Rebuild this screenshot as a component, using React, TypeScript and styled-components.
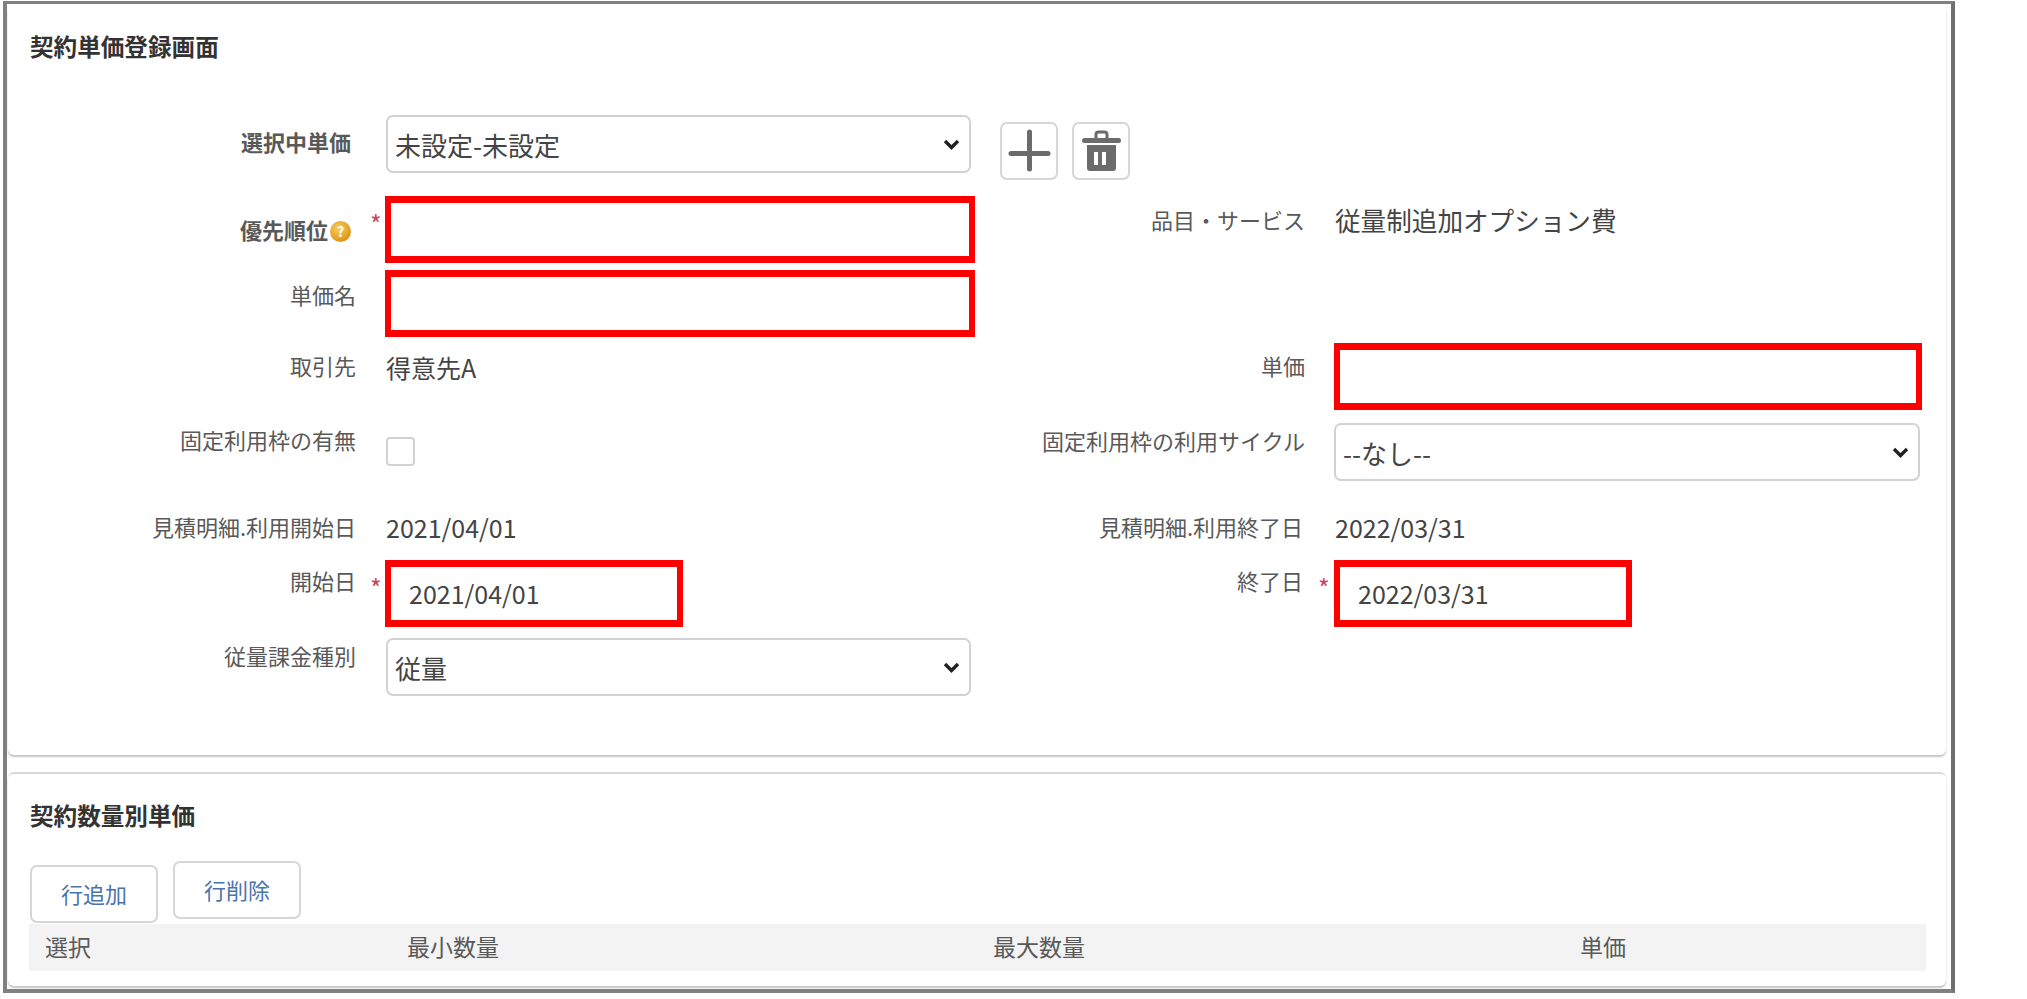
import styled, { createGlobalStyle } from 'styled-components';

const GlobalStyle = createGlobalStyle`
  html, body {
    margin: 0;
    padding: 0;
    background: #ffffff;
    font-family: "Noto Sans CJK JP", "Liberation Sans", sans-serif;
  }
`;

const chevron = encodeURIComponent(
  '<svg xmlns="http://www.w3.org/2000/svg" width="17" height="11" viewBox="0 0 17 11"><path d="M2 2l6.5 6.5L15 2" fill="none" stroke="#222" stroke-width="3.4"/></svg>',
);

const Frame = styled.div`
  box-sizing: border-box;
  width: 1952px;
  height: 992px;
  margin: 1px 0 0 3px;
  border: 4px solid #808080;
  border-top-width: 3px;
  border-right-color: #6f6f6f;
  padding: 0 5px 3px 1px;
  display: flex;
  flex-direction: column;
  gap: 17px;
`;

const Panel = styled.section<{ $height: number; $topBorder?: boolean }>`
  box-sizing: border-box;
  height: ${(p) => p.$height}px;
  border-radius: 6px;
  background: #fff;
  box-shadow: 0 2px 2px #c4c4c4;
  border-top: ${(p) => (p.$topBorder ? '2px solid #d8d8d8' : 'none')};
`;

const PanelTitle = styled.h2<{ $top: number }>`
  margin: 0 0 0 22px;
  padding-top: ${(p) => p.$top}px;
  font-size: 23.6px;
  line-height: 30px;
  font-weight: 700;
  color: #333;
`;

const Form = styled.div`
  margin-top: 54px;
`;

const Row = styled.div<{ $top?: number; $height?: number }>`
  display: grid;
  grid-template-columns: 348px 29px 590px 330px 29px 588px;
  margin-top: ${(p) => p.$top ?? 0}px;
  min-height: ${(p) => p.$height ?? 0}px;
  align-items: start;

  > * {
    grid-row: 1;
  }
`;

const Label = styled.div<{ $right?: boolean; $top: number; $end?: number; $bold?: boolean }>`
  grid-column: ${(p) => (p.$right ? 4 : 1)};
  display: flex;
  justify-content: flex-end;
  align-items: center;
  gap: 2px;
  padding-top: ${(p) => p.$top}px;
  padding-right: ${(p) => p.$end ?? 0}px;
  font-size: 22px;
  line-height: 30px;
  white-space: nowrap;
  font-weight: ${(p) => (p.$bold ? 700 : 400)};
  color: #595959;
`;

const HelpBadge = styled.span`
  width: 21px;
  height: 21px;
  margin-top: 5px;
  border-radius: 50%;
  background: radial-gradient(circle at 40% 35%, #f6cf63, #e39a1c 65%, #c87d12);
  color: #fff;
  font-size: 14px;
  line-height: 21px;
  font-weight: 700;
  text-align: center;
`;

const Star = styled.span<{ $right?: boolean; $top: number }>`
  grid-column: ${(p) => (p.$right ? 5 : 2)};
  padding: ${(p) => p.$top}px 0 0 ${(p) => (p.$right ? 13 : 14)}px;
  font-size: 25px;
  line-height: 20px;
  color: #c8485f;
`;

const Value = styled.div<{ $right?: boolean; $top: number; $size?: number }>`
  grid-column: ${(p) => (p.$right ? 6 : 3)};
  padding: ${(p) => p.$top}px 0 0 1px;
  font-size: ${(p) => p.$size ?? 25}px;
  line-height: 30px;
  color: #444;
  white-space: nowrap;
`;

const RedInput = styled.input<{ $right?: boolean; $width: number }>`
  grid-column: ${(p) => (p.$right ? 6 : 3)};
  box-sizing: border-box;
  display: block;
  width: ${(p) => p.$width}px;
  height: 67px;
  margin: 0;
  padding: 0 0 2px 18px;
  border: solid #ff0000;
  border-width: 7px 6px;
  border-radius: 0;
  outline: none;
  background: #fff;
  font-family: inherit;
  font-size: 25px;
  color: #444;
`;

const Select = styled.select<{ $right?: boolean; $width?: number }>`
  grid-column: ${(p) => (p.$right ? 6 : 3)};
  box-sizing: border-box;
  display: block;
  appearance: none;
  width: ${(p) => p.$width ?? 585}px;
  height: 58px;
  margin: 0 0 0 ${(p) => (p.$right ? 0 : 1)}px;
  padding: 0 0 0 7px;
  border: 2px solid #d2d2d2;
  border-radius: 7px;
  background: #fff url("data:image/svg+xml,${chevron}") no-repeat right 9px center;
  font-family: inherit;
  font-size: 26px;
  color: #444;
`;

const IconGroup = styled.div`
  grid-column: 4;
  display: flex;
  gap: 14px;
  margin: 7px 0 0 25px;
`;

const IconButton = styled.button`
  box-sizing: border-box;
  width: 58px;
  height: 58px;
  padding: 0;
  border: 2px solid #d6d6d6;
  border-radius: 7px;
  background: #fff;

  svg {
    display: block;
    margin: -2px;
  }
`;

const CheckBox = styled.span`
  grid-column: 3;
  box-sizing: border-box;
  display: block;
  width: 29px;
  height: 29px;
  margin: 14px 0 0 1px;
  border: 2px solid #d2d2d2;
  border-radius: 4px;
  background: #fff;
`;

const Toolbar = styled.div`
  display: flex;
  align-items: flex-end;
  gap: 15px;
  margin: 31px 0 1px 22px;
  height: 62px;
`;

const RowButton = styled.button<{ $raised?: boolean }>`
  box-sizing: border-box;
  width: 128px;
  height: 58px;
  margin-bottom: ${(p) => (p.$raised ? 4 : 0)}px;
  padding: 0 0 2px;
  border: 2px solid #d6d6d6;
  border-radius: 7px;
  background: #fff;
  font-family: inherit;
  font-size: 22px;
  color: #4a74ad;
`;

const TableHead = styled.div`
  display: grid;
  grid-template-columns: 362px 586px 587px 1fr;
  align-items: center;
  box-sizing: border-box;
  width: 1897px;
  height: 47px;
  margin-left: 21px;
  padding: 0 0 4px 16px;
  background: #f3f3f3;
  font-size: 23px;
  color: #595959;
`;

function PlusIcon() {
  return (
    <svg width="58" height="58" viewBox="0 0 58 58">
      <path d="M11 31.5H48M29.5 10V47" stroke="#6b6b6b" strokeWidth="5" strokeLinecap="round" fill="none" />
    </svg>
  );
}

function TrashIcon() {
  return (
    <svg width="58" height="58" viewBox="0 0 58 58">
      <path d="M24 16V12.5Q24 10 26.5 10H32.5Q35 10 35 12.5V16" stroke="#6b6b6b" strokeWidth="3" fill="none" />
      <path d="M12.5 18.5H46.5" stroke="#6b6b6b" strokeWidth="5" strokeLinecap="round" fill="none" />
      <path
        d="M15 23H44V46Q44 49 41 49H18Q15 49 15 46ZM22 30V43H26V30ZM30 30V43H34V30Z"
        fill="#6b6b6b"
        fillRule="evenodd"
      />
    </svg>
  );
}

export default function App() {
  return (
    <>
      <GlobalStyle />
      <Frame>
        <Panel $height={751}>
          <PanelTitle $top={27}>契約単価登録画面</PanelTitle>
          <Form>
            <Row>
              <Label $top={11} $end={5} $bold>選択中単価</Label>
              <Select defaultValue="a">
                <option value="a">未設定-未設定</option>
              </Select>
              <IconGroup>
                <IconButton aria-label="追加"><PlusIcon /></IconButton>
                <IconButton aria-label="削除"><TrashIcon /></IconButton>
              </IconGroup>
            </Row>
            <Row $top={16}>
              <Label $top={18} $end={5} $bold>優先順位<HelpBadge>?</HelpBadge></Label>
              <Star $top={17}>*</Star>
              <RedInput $width={590} />
              <Label $right $top={8}>品目・サービス</Label>
              <Value $right $top={9} $size={25.6}>従量制追加オプション費</Value>
            </Row>
            <Row $top={7}>
              <Label $top={9}>単価名</Label>
              <RedInput $width={590} />
            </Row>
            <Row $top={6}>
              <Label $top={7}>取引先</Label>
              <Value $top={9}>得意先A</Value>
              <Label $right $top={7}>単価</Label>
              <RedInput $right $width={588} />
            </Row>
            <Row $top={13}>
              <Label $top={1}>固定利用枠の有無</Label>
              <CheckBox />
              <Label $right $top={2}>固定利用枠の利用サイクル</Label>
              <Select $right $width={586} defaultValue="none">
                <option value="none">--なし--</option>
              </Select>
            </Row>
            <Row $top={29} $height={38}>
              <Label $top={1}>見積明細.利用開始日</Label>
              <Value $top={2}>2021/04/01</Value>
              <Label $right $top={1} $end={2}>見積明細.利用終了日</Label>
              <Value $right $top={2}>2022/03/31</Value>
            </Row>
            <Row $top={12}>
              <Label $top={5}>開始日</Label>
              <Star $top={17}>*</Star>
              <RedInput $width={298} defaultValue="2021/04/01" />
              <Label $right $top={5} $end={2}>終了日</Label>
              <Star $right $top={17}>*</Star>
              <RedInput $right $width={298} defaultValue="2022/03/31" />
            </Row>
            <Row $top={11}>
              <Label $top={2}>従量課金種別</Label>
              <Select defaultValue="usage">
                <option value="usage">従量</option>
              </Select>
            </Row>
          </Form>
        </Panel>
        <Panel $height={214} $topBorder>
          <PanelTitle $top={26}>契約数量別単価</PanelTitle>
          <Toolbar>
            <RowButton>行追加</RowButton>
            <RowButton $raised>行削除</RowButton>
          </Toolbar>
          <TableHead>
            <span>選択</span>
            <span>最小数量</span>
            <span>最大数量</span>
            <span>単価</span>
          </TableHead>
        </Panel>
      </Frame>
    </>
  );
}
